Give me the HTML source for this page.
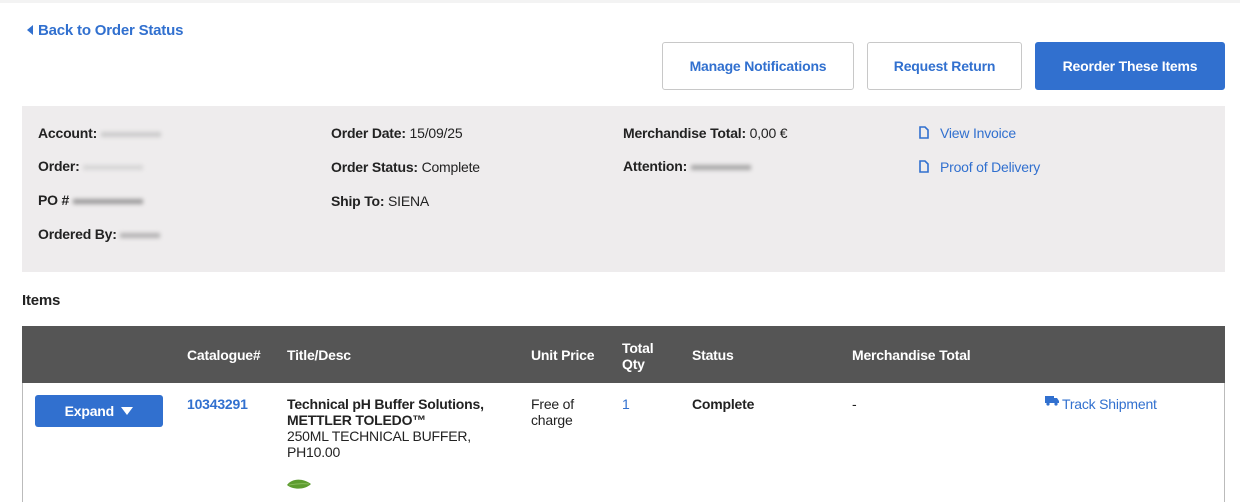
<!DOCTYPE html>
<html><head><meta charset="utf-8"><style>
*{margin:0;padding:0;box-sizing:border-box}
html,body{width:1240px;height:502px;overflow:hidden}
body{background:#fff;font-family:"Liberation Sans",Arial,sans-serif;color:#222;position:relative;font-size:14px;letter-spacing:-0.2px}
.a{position:absolute;white-space:nowrap}
.b{font-weight:bold}
.blue{color:#3170cf}
.btn{position:absolute;top:42px;height:48px;border:1px solid #c8c8c8;border-radius:3px;background:#fff;color:#3170cf;font-weight:bold;font-size:14px;display:flex;align-items:center;justify-content:center}
.blur{display:inline-block;height:5px;background:#ccc;filter:blur(2px);vertical-align:middle;opacity:.7}
.th{position:absolute;color:#fff;font-weight:bold;font-size:14px;line-height:16px}
</style></head><body>
<div class="a" style="top:0;left:0;width:1240px;height:3px;background:#f3f3f3"></div>
<svg class="a" style="left:27px;top:25px" width="6" height="10"><path d="M6 0L0 5L6 10Z" fill="#3170cf"/></svg>
<div class="a b blue" style="left:38px;top:22px;font-size:15px">Back to Order Status</div>
<div class="btn" style="left:662px;width:192px">Manage Notifications</div>
<div class="btn" style="left:867px;width:155px">Request Return</div>
<div class="btn" style="left:1035px;width:190px;background:#3170cf;border-color:#3170cf;color:#fff">Reorder These Items</div>

<div class="a" style="left:22px;top:106px;width:1203px;height:166px;background:#eeeced"></div>
<div class="a" style="left:38px;top:125px"><span class="b">Account:</span> <span class="blur" style="width:60px;background:#bbb"></span></div>
<div class="a" style="left:38px;top:158px"><span class="b">Order:</span> <span class="blur" style="width:60px"></span></div>
<div class="a" style="left:38px;top:192px"><span class="b">PO #</span> <span class="blur" style="width:70px;background:#777"></span></div>
<div class="a" style="left:38px;top:226px"><span class="b">Ordered By:</span> <span class="blur" style="width:40px;background:#999"></span></div>
<div class="a" style="left:331px;top:125px"><span class="b">Order Date:</span> 15/09/25</div>
<div class="a" style="left:331px;top:159px"><span class="b">Order Status:</span> Complete</div>
<div class="a" style="left:331px;top:193px"><span class="b">Ship To:</span> SIENA</div>
<div class="a" style="left:623px;top:125px"><span class="b">Merchandise Total:</span> 0,00 €</div>
<div class="a" style="left:623px;top:158px"><span class="b">Attention:</span> <span class="blur" style="width:60px;background:#888"></span></div>
<svg class="a" style="left:919px;top:126px" width="10" height="13"><path d="M1 1H6L9 4V12H1Z" fill="none" stroke="#3170cf" stroke-width="1.6"/></svg>
<div class="a blue" style="left:940px;top:125px">View Invoice</div>
<svg class="a" style="left:919px;top:160px" width="10" height="13"><path d="M1 1H6L9 4V12H1Z" fill="none" stroke="#3170cf" stroke-width="1.6"/></svg>
<div class="a blue" style="left:940px;top:159px">Proof of Delivery</div>

<div class="a b" style="left:22px;top:292px;font-size:15px">Items</div>
<div class="a" style="left:22px;top:326px;width:1203px;height:180px;border-left:1px solid #bbb;border-right:1px solid #bbb"></div>
<div class="a" style="left:22px;top:326px;width:1203px;height:57px;background:#555"></div>
<div class="th" style="left:187px;top:347px">Catalogue#</div>
<div class="th" style="left:287px;top:347px">Title/Desc</div>
<div class="th" style="left:531px;top:347px">Unit Price</div>
<div class="th" style="left:622px;top:340px">Total<br>Qty</div>
<div class="th" style="left:692px;top:347px">Status</div>
<div class="th" style="left:852px;top:347px">Merchandise Total</div>

<div class="a" style="left:35px;top:395px;width:128px;height:32px;background:#3170cf;border-radius:3px;color:#fff;font-weight:bold;display:flex;align-items:center;justify-content:center">Expand&nbsp;&nbsp;<svg width="12" height="8"><path d="M0 0H12L6 8Z" fill="#fff"/></svg></div>
<div class="a b blue" style="left:187px;top:396px">10343291</div>
<div class="a" style="left:287px;top:396px;line-height:16px"><b>Technical pH Buffer Solutions,<br>METTLER TOLEDO™</b><br>250ML TECHNICAL BUFFER,<br>PH10.00</div>
<svg class="a" style="left:287px;top:478px" width="25" height="13"><path d="M0 7C5 0 16 0 24 6C18 12 6 12 0 7Z" fill="#5d9c2f"/><path d="M2 7Q12 5 22 6" stroke="#8dc060" stroke-width="0.8" fill="none"/></svg>
<div class="a" style="left:531px;top:396px;line-height:16px">Free of<br>charge</div>
<div class="a blue" style="left:622px;top:396px">1</div>
<div class="a b" style="left:692px;top:396px">Complete</div>
<div class="a" style="left:852px;top:396px">-</div>
<svg class="a" style="left:1045px;top:396px" width="14" height="10"><path d="M0 0H9V7H0Z M9 2H12L14 5V7H9Z" fill="#3170cf"/><circle cx="3" cy="8" r="1.6" fill="#3170cf"/><circle cx="11" cy="8" r="1.6" fill="#3170cf"/></svg>
<div class="a blue" style="left:1062px;top:396px">Track Shipment</div>
</body></html>
